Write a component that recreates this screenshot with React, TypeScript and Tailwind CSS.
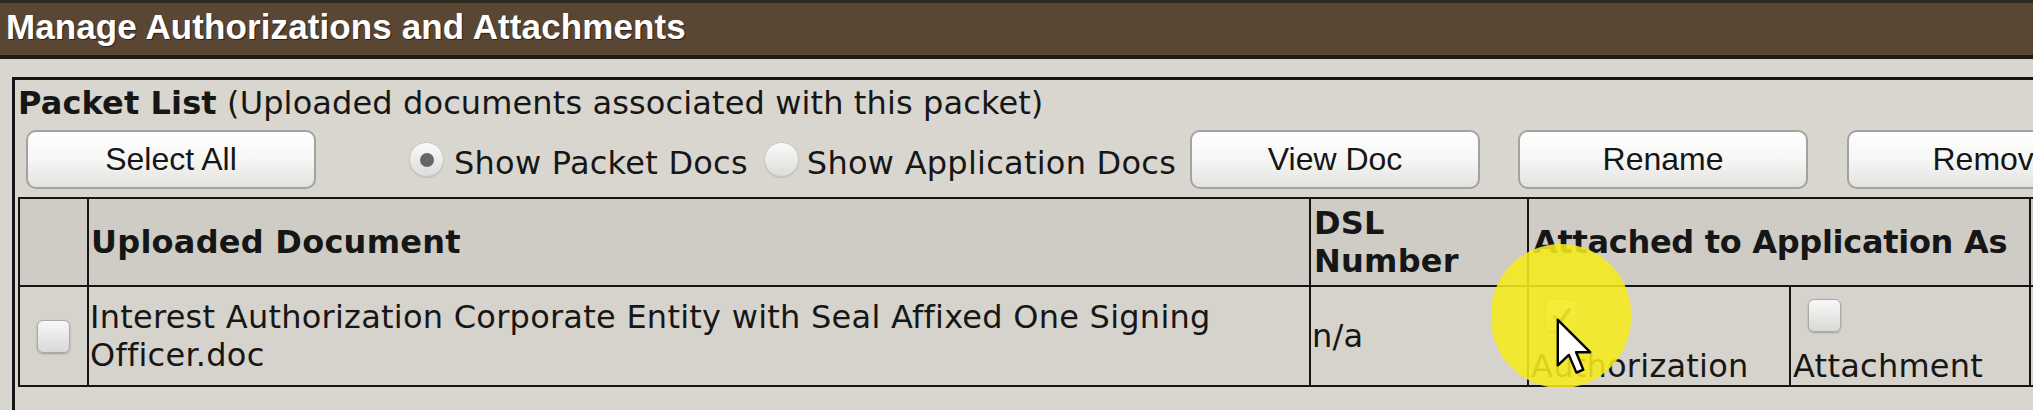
import React from 'react';

const ui = "font-['Liberation_Sans',Arial,sans-serif]";

function Btn({ label, className = '' }: { label: string; className?: string }) {
  return (
    <button
      className={`h-[59px] w-[290px] shrink-0 rounded-[10px] border-2 border-[#a2a29e] bg-linear-to-b from-[#ffffff] via-[#f6f6f5] to-[#e2e2df] pb-[2px] ${ui} text-[32px] tracking-normal text-[#151515] shadow-[inset_0_1px_0_#fff] ${className}`}
    >
      {label}
    </button>
  );
}

function Radio({ checked, className = '' }: { checked?: boolean; className?: string }) {
  return (
    <span
      className={`flex h-[35px] w-[35px] shrink-0 items-center justify-center rounded-full border border-[#c6c6c3] bg-linear-to-b from-[#fbfbfb] to-[#dcdcda] shadow-[0_1px_1px_rgba(0,0,0,0.12)] ${className}`}
    >
      {checked && <span className="h-[14px] w-[14px] rounded-full bg-[#666]" />}
    </span>
  );
}

function Check({ checked, className = '' }: { checked?: boolean; className?: string }) {
  return (
    <span
      className={`flex h-[33px] w-[33px] items-center justify-center rounded-[6px] border border-[#a9a9a6] bg-linear-to-b from-[#f8f8f8] to-[#d9d9d7] shadow-[0_1px_2px_rgba(0,0,0,0.25)] ${className}`}
    >
      {checked && (
        <svg width="22" height="22" viewBox="0 0 22 22">
          <path d="M4 12 L9 17 L18 5" fill="none" stroke="#444" strokeWidth="3.5" strokeLinecap="round" strokeLinejoin="round" />
        </svg>
      )}
    </span>
  );
}

export default function App() {
  const cell = 'border-2 border-[#151515]';

  return (
    <div className="relative h-[410px] w-[2033px] overflow-hidden bg-[#d8d6cf] font-['DejaVu_Sans',Verdana,sans-serif] tracking-[0.25px] text-[#161616]">
      {/* title bar */}
      <div className="h-[59px] border-t-[3px] border-b-4 border-t-[#2c2a1f] border-b-[#1e1a14] bg-[#5a4733] pl-[6px] pt-[4px]">
        <h1
          className={`${ui} text-[35px] font-bold leading-[40px] tracking-[0.1px] text-white [text-shadow:1px_1px_1px_rgba(0,0,0,0.55)]`}
        >
          Manage Authorizations and Attachments
        </h1>
      </div>

      {/* packet box */}
      <div className="ml-[12px] mt-[18px] w-[2100px] border-l-[3px] border-t-[3px] border-[#141414] pl-[3px] pt-[5px] pb-[40px]">
        <div className="whitespace-nowrap text-[32px] leading-[37px] tracking-[0.12px]">
          <span className="font-bold">Packet List</span> (Uploaded documents associated with this packet)
        </div>

        <div className="mt-[8px] flex h-[59px] items-center whitespace-nowrap pl-[8px]">
          <Btn label="Select All" />
          <Radio checked className="ml-[93px]" />
          <span className="ml-[10px] pt-[8px] text-[32px] leading-[37px]">Show Packet Docs</span>
          <Radio className="ml-[16px]" />
          <span className="ml-[8px] pt-[8px] text-[32px] leading-[37px]">Show Application Docs</span>
          <Btn label="View Doc" className="ml-[14px]" />
          <Btn label="Rename" className="ml-[38px]" />
          <Btn label="Remove" className="ml-[39px]" />
        </div>

        <table className="mt-[8px] w-[2240px] table-fixed border-collapse text-[32px]">
          <colgroup>
            <col className="w-[69px]" />
            <col className="w-[1222px]" />
            <col className="w-[218px]" />
            <col className="w-[262px]" />
            <col className="w-[240px]" />
            <col className="w-[229px]" />
          </colgroup>
          <thead>
            <tr className="bg-[#cfccc5] text-left font-bold">
              <th className={`${cell} h-[88px]`} />
              <th className={`${cell} px-[2px] leading-[38px]`}>Uploaded Document</th>
              <th className={`${cell} px-[3px] leading-[38px]`}>DSL Number</th>
              <th colSpan={2} className={`${cell} whitespace-nowrap px-[4px] leading-[38px] tracking-[-0.3px]`}>
                Attached to Application As
              </th>
              <th className={cell} />
            </tr>
          </thead>
          <tbody>
            <tr className="bg-[#d6d3cc] align-middle leading-[38px]">
              <td className={`${cell} h-[100px]`}>
                <div className="flex justify-center">
                  <Check />
                </div>
              </td>
              <td className={`${cell} pl-[1px]`}>
                Interest Authorization Corporate Entity with Seal Affixed One Signing Officer.doc
              </td>
              <td className={`${cell} pl-[1px]`}>n/a</td>
              <td className={`${cell} pl-[2px] pt-[12px] align-top`}>
                <Check checked className="ml-[14px] mb-[15px]" />
                Authorization
              </td>
              <td className={`${cell} pl-[2px] pt-[12px] align-top`}>
                <Check className="ml-[15px] mb-[15px]" />
                Attachment
              </td>
              <td className={cell} />
            </tr>
          </tbody>
        </table>
      </div>

      {/* click highlight + cursor from the recording */}
      <div className="pointer-events-none absolute left-[1491px] top-[244px] h-[144px] w-[140px] rounded-full bg-[rgba(246,234,28,0.88)]" />
      <svg
        className="pointer-events-none absolute left-[1556px] top-[318px]"
        width="36"
        height="57"
        viewBox="0 0 12 19"
      >
        <path
          d="M0.6 0.6 L0.6 15.8 L4.3 12.3 L6.8 18.2 L9.1 17.2 L6.7 11.4 L11.4 11.4 Z"
          fill="#fff"
          stroke="#000"
          strokeWidth="0.8"
          strokeLinejoin="round"
        />
      </svg>
    </div>
  );
}
